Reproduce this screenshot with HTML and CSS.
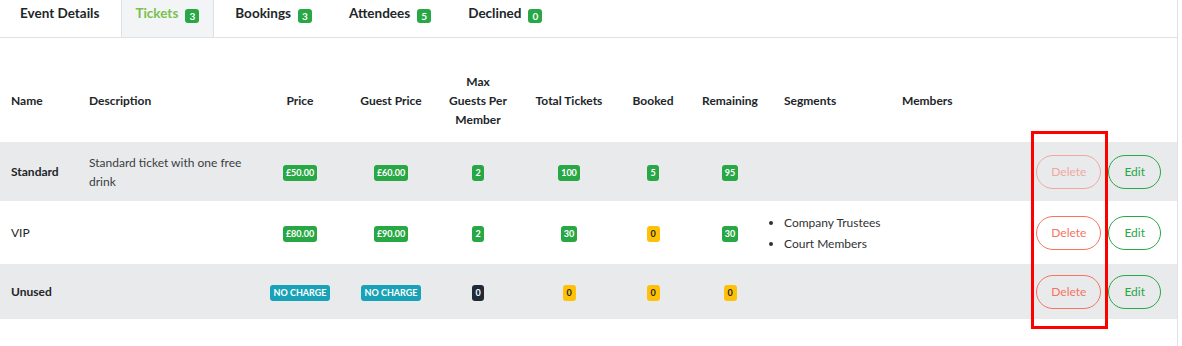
FILE: index.html
```html
<!DOCTYPE html>
<html lang="en">
<head>
<meta charset="utf-8">
<title>Tickets</title>
<link rel="stylesheet" href="styles.css">
</head>
<body>
<div class="page">
  <nav class="tabs">
    <a class="tab">Event Details</a>
    <a class="tab active">Tickets <span class="count">3</span></a>
    <a class="tab">Bookings <span class="count">3</span></a>
    <a class="tab">Attendees <span class="count">5</span></a>
    <a class="tab">Declined <span class="count">0</span></a>
  </nav>

  <table class="tickets">
    <colgroup>
      <col class="c-name"><col class="c-desc"><col class="c-price"><col class="c-guest">
      <col class="c-max"><col class="c-total"><col class="c-booked"><col class="c-rem">
      <col class="c-seg"><col class="c-mem"><col class="c-act">
    </colgroup>
    <thead>
      <tr>
        <th class="left first">Name</th>
        <th class="left">Description</th>
        <th>Price</th>
        <th>Guest Price</th>
        <th>Max<br>Guests Per<br>Member</th>
        <th>Total Tickets</th>
        <th>Booked</th>
        <th class="rem">Remaining</th>
        <th class="left">Segments</th>
        <th class="left mem">Members</th>
        <th></th>
      </tr>
    </thead>
    <tbody>
      <tr class="shade">
        <td class="left first name">Standard</td>
        <td class="left desc">Standard ticket with one free drink</td>
        <td><span class="badge green">£50.00</span></td>
        <td><span class="badge green">£60.00</span></td>
        <td><span class="badge green">2</span></td>
        <td><span class="badge green">100</span></td>
        <td><span class="badge green">5</span></td>
        <td class="rem"><span class="badge green">95</span></td>
        <td class="left"></td>
        <td class="left mem"></td>
        <td class="actions"><button class="btn delete disabled">Delete</button><button class="btn edit">Edit</button></td>
      </tr>
      <tr>
        <td class="left first name light">VIP</td>
        <td class="left desc"></td>
        <td><span class="badge green">£80.00</span></td>
        <td><span class="badge green">£90.00</span></td>
        <td><span class="badge green">2</span></td>
        <td><span class="badge green">30</span></td>
        <td><span class="badge yellow">0</span></td>
        <td class="rem"><span class="badge green">30</span></td>
        <td class="left">
          <ul class="segments">
            <li>Company Trustees</li>
            <li>Court Members</li>
          </ul>
        </td>
        <td class="left mem"></td>
        <td class="actions"><button class="btn delete">Delete</button><button class="btn edit">Edit</button></td>
      </tr>
      <tr class="shade">
        <td class="left first name">Unused</td>
        <td class="left desc"></td>
        <td><span class="badge teal">NO CHARGE</span></td>
        <td><span class="badge teal">NO CHARGE</span></td>
        <td><span class="badge dark">0</span></td>
        <td><span class="badge yellow">0</span></td>
        <td><span class="badge yellow">0</span></td>
        <td class="rem"><span class="badge yellow">0</span></td>
        <td class="left"></td>
        <td class="left mem"></td>
        <td class="actions"><button class="btn delete">Delete</button><button class="btn edit">Edit</button></td>
      </tr>
    </tbody>
  </table>

  <div class="highlight"></div>
</div>
</body>
</html>
```

FILE: styles.css
```css
* { box-sizing: border-box; }

html, body {
  margin: 0;
  padding: 0;
  background: #ffffff;
}

body {
  font-family: Lato, "Open Sans", "Liberation Sans", sans-serif;
  color: #212529;
  font-size: 12px;
}

.page {
  position: relative;
  width: 1178px;
  min-height: 346px;
  border-right: 1px solid #dfe1e4;
}

/* Tabs */
.tabs {
  display: flex;
  height: 38px;
  padding-left: 5px;
  border-bottom: 1px solid #dfe1e4;
}

.tab {
  display: flex;
  align-items: flex-start;
  gap: 7px;
  padding: 3px 15px 0 14px;
  margin-right: 6px;
  font-size: 13.5px;
  font-weight: 700;
  line-height: 20px;
  color: #212529;
  border-left: 1px solid transparent;
  border-right: 1px solid transparent;
}

.tab.active {
  background: #f3f4f6;
  border-left-color: #dfe1e4;
  border-right-color: #dfe1e4;
  color: #79c04c;
  padding-left: 13px;
  padding-right: 14px;
}

.count {
  display: inline-block;
  margin-top: 6px;
  padding: 2px 3px;
  min-width: 14px;
  text-align: center;
  font-size: 10px;
  line-height: 10px;
  font-weight: 700;
  color: #ffffff;
  background: #28a745;
  border-radius: 3px;
}

/* Table */
.tickets {
  margin-top: 22px;
  width: 1177px;
  table-layout: fixed;
  border-collapse: collapse;
}

.c-name { width: 78px; }
.c-desc { width: 187px; }
.c-price { width: 70px; }
.c-guest { width: 112px; }
.c-max { width: 62px; }
.c-total { width: 120px; }
.c-booked { width: 48px; }
.c-rem { width: 96px; }
.c-seg { width: 117px; }
.c-mem { width: 130px; }
.c-act { width: 157px; }

.tickets th {
  padding: 12px 0 13px;
  font-size: 12px;
  font-weight: 700;
  line-height: 19px;
  text-align: center;
  vertical-align: middle;
  white-space: nowrap;
}

.tickets td {
  padding: 10.5px 0;
  font-size: 12px;
  line-height: 19px;
  text-align: center;
  vertical-align: middle;
}

.tickets .left {
  text-align: left;
  padding-left: 11px;
}

.tickets .desc {
  padding-right: 12px;
  color: #3a3d40;
}

.tickets .rem { padding-left: 10px; }
.tickets .mem { padding-left: 12px; }

.name { font-weight: 700; }
.name.light { font-weight: 400; }

.shade td { background: #e9eaec; }

/* Badges */
.badge {
  display: inline-block;
  padding: 3.5px 3px;
  font-size: 9px;
  line-height: 9px;
  font-weight: 700;
  border-radius: 3px;
  color: #ffffff;
  vertical-align: middle;
  min-width: 11px;
}

.badge.green { background: #28a745; }
.badge.teal { background: #17a2b8; padding-left: 4px; padding-right: 4px; }
.badge.dark { background: #1e2b37; }
.badge.yellow { background: #ffc107; color: #212529; min-width: 13px; }

/* Segments list */
.segments {
  margin: 0;
  padding: 0;
  list-style: disc outside;
}

.segments li {
  line-height: 21px;
  color: #2f3235;
}

/* Buttons */
.tickets .actions {
  text-align: right;
  padding-right: 16px;
  white-space: nowrap;
}

.btn {
  display: inline-block;
  height: 34px;
  padding: 0 14px;
  margin-left: 7px;
  font-family: Lato, "Open Sans", "Liberation Sans", sans-serif;
  font-size: 12px;
  line-height: 32px;
  background: transparent;
  border-radius: 17px;
  vertical-align: middle;
  cursor: pointer;
}

.btn.delete {
  color: #f5735f;
  border: 1px solid #f5735f;
}

.btn.delete.disabled { opacity: 0.55; }

.btn.edit {
  color: #28a745;
  border: 1px solid #28a745;
  padding: 0 15px;
}

/* Annotation overlay */
.highlight {
  position: absolute;
  left: 1031px;
  top: 131px;
  width: 77px;
  height: 198px;
  border: 3px solid #ff0000;
  pointer-events: none;
}
```
